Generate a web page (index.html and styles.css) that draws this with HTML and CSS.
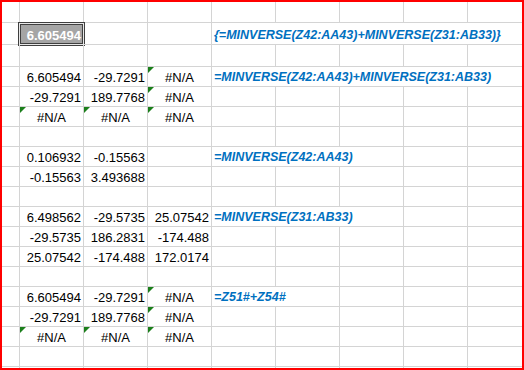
FILE: index.html
```html
<!DOCTYPE html>
<html>
<head>
<meta charset="utf-8">
<link rel="stylesheet" href="styles.css">
</head>
<body>
<div class="sheet">
  <div class="row h21"><div class="c"></div><div class="c"></div><div class="c"></div><div class="c"></div><div class="c"></div><div class="c"></div><div class="c"></div><div class="c"></div><div class="c"></div></div>
  <div class="row h22"><div class="c"></div><div class="c chk"><span class="box"></span><span class="val">6.605494</span></div><div class="c"></div><div class="c"></div><div class="c f s5">{=MINVERSE(Z42:AA43)+MINVERSE(Z31:AB33)}</div></div>
  <div class="row h22"><div class="c"></div><div class="c"></div><div class="c"></div><div class="c"></div><div class="c"></div><div class="c"></div><div class="c"></div><div class="c"></div><div class="c"></div></div>
  <div class="row"><div class="c"></div><div class="c">6.605494</div><div class="c">-29.7291</div><div class="c ctr err">#N/A</div><div class="c f s5">=MINVERSE(Z42:AA43)+MINVERSE(Z31:AB33)</div></div>
  <div class="row"><div class="c"></div><div class="c">-29.7291</div><div class="c">189.7768</div><div class="c ctr err">#N/A</div><div class="c"></div><div class="c"></div><div class="c"></div><div class="c"></div><div class="c"></div></div>
  <div class="row"><div class="c"></div><div class="c ctr err">#N/A</div><div class="c ctr err">#N/A</div><div class="c ctr err">#N/A</div><div class="c"></div><div class="c"></div><div class="c"></div><div class="c"></div><div class="c"></div></div>
  <div class="row"><div class="c"></div><div class="c"></div><div class="c"></div><div class="c"></div><div class="c"></div><div class="c"></div><div class="c"></div><div class="c"></div><div class="c"></div></div>
  <div class="row"><div class="c"></div><div class="c">0.106932</div><div class="c">-0.15563</div><div class="c"></div><div class="c f s3">=MINVERSE(Z42:AA43)</div><div class="c"></div><div class="c"></div></div>
  <div class="row"><div class="c"></div><div class="c">-0.15563</div><div class="c">3.493688</div><div class="c"></div><div class="c"></div><div class="c"></div><div class="c"></div><div class="c"></div><div class="c"></div></div>
  <div class="row"><div class="c"></div><div class="c"></div><div class="c"></div><div class="c"></div><div class="c"></div><div class="c"></div><div class="c"></div><div class="c"></div><div class="c"></div></div>
  <div class="row"><div class="c"></div><div class="c">6.498562</div><div class="c">-29.5735</div><div class="c">25.07542</div><div class="c f s3">=MINVERSE(Z31:AB33)</div><div class="c"></div><div class="c"></div></div>
  <div class="row"><div class="c"></div><div class="c">-29.5735</div><div class="c">186.2831</div><div class="c">-174.488</div><div class="c"></div><div class="c"></div><div class="c"></div><div class="c"></div><div class="c"></div></div>
  <div class="row"><div class="c"></div><div class="c">25.07542</div><div class="c">-174.488</div><div class="c">172.0174</div><div class="c"></div><div class="c"></div><div class="c"></div><div class="c"></div><div class="c"></div></div>
  <div class="row"><div class="c"></div><div class="c"></div><div class="c"></div><div class="c"></div><div class="c"></div><div class="c"></div><div class="c"></div><div class="c"></div><div class="c"></div></div>
  <div class="row"><div class="c"></div><div class="c">6.605494</div><div class="c">-29.7291</div><div class="c ctr err">#N/A</div><div class="c f s2">=Z51#+Z54#</div><div class="c"></div><div class="c"></div><div class="c"></div></div>
  <div class="row"><div class="c"></div><div class="c">-29.7291</div><div class="c">189.7768</div><div class="c ctr err">#N/A</div><div class="c"></div><div class="c"></div><div class="c"></div><div class="c"></div><div class="c"></div></div>
  <div class="row"><div class="c"></div><div class="c ctr err">#N/A</div><div class="c ctr err">#N/A</div><div class="c ctr err">#N/A</div><div class="c"></div><div class="c"></div><div class="c"></div><div class="c"></div><div class="c"></div></div>
  <div class="row"><div class="c"></div><div class="c"></div><div class="c"></div><div class="c"></div><div class="c"></div><div class="c"></div><div class="c"></div><div class="c"></div><div class="c"></div></div>
  <div class="row last"><div class="c"></div><div class="c"></div><div class="c"></div><div class="c"></div><div class="c"></div><div class="c"></div><div class="c"></div><div class="c"></div><div class="c"></div></div>
</div>
</body>
</html>
```

FILE: styles.css
```css
html, body {
  margin: 0;
  padding: 0;
  background: #ffffff;
}
.sheet {
  width: 524px;
  height: 370px;
  box-sizing: border-box;
  border: 2px solid #ff0000;
  background: #ffffff;
  overflow: hidden;
  font-family: "Liberation Sans", Arial, sans-serif;
  font-size: 13px;
  color: #000000;
}
.row {
  display: grid;
  grid-template-columns: 18px repeat(7, 64px) 54px;
  height: 20px;
}
.row.h21 { height: 21px; }
.row.h22 { height: 22px; }
.row.last { height: 1px; }
.c {
  position: relative;
  box-sizing: border-box;
  border-right: 1px solid #d4d4d4;
  border-bottom: 1px solid #d4d4d4;
  display: flex;
  align-items: flex-end;
  justify-content: flex-end;
  padding: 0 2px 1px 2px;
  line-height: 15px;
  white-space: nowrap;
  min-width: 0;
}
.c:last-child { border-right: none; }
.row.last .c { border-bottom: none; padding: 0; }
.ctr { justify-content: center; }
.err::before {
  content: "";
  position: absolute;
  top: 0;
  left: 0;
  width: 0;
  height: 0;
  border-top: 6px solid #1b7f1b;
  border-right: 6px solid transparent;
}
.f {
  justify-content: flex-start;
  color: #0070c0;
  font-weight: bold;
  font-style: italic;
  font-size: 12.5px;
}
.s5 { grid-column: span 5; }
.s3 { grid-column: span 3; }
.s2 { grid-column: span 2; }
.chk { color: #ffffff; font-weight: bold; }
.chk .box {
  position: absolute;
  left: -2px;
  right: -2px;
  top: -1px;
  bottom: -2px;
  background: #a5a5a5;
  border: 1px solid #3f3f3f;
  box-shadow: inset 0 0 0 1px #e8e8e8, inset 0 0 0 2px #3f3f3f;
}
.chk .val { position: relative; }
```
